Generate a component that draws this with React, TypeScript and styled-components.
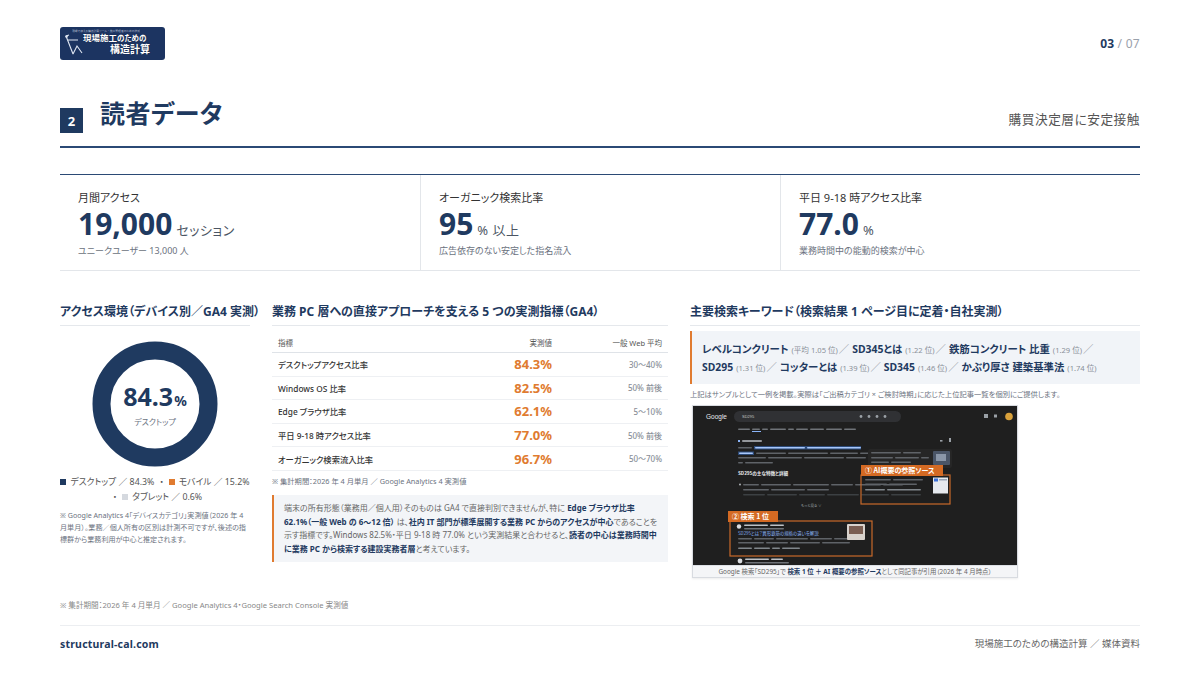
import * as React from 'react';
import styled, { createGlobalStyle } from 'styled-components';

const NAVY = '#1f3a60';
const ORANGE = '#e07b30';
const GRAY = '#6b7280';

const GlobalStyle = createGlobalStyle`
  * { box-sizing: border-box; margin: 0; padding: 0; }
  body {
    margin: 0;
    background: #fff;
    color: #333;
    font-family: "Noto Sans", "Noto Sans CJK JP", sans-serif;
    font-feature-settings: "palt";
  }
`;

const stats = [
  { label: '月間アクセス', value: '19,000', unit: 'セッション', sub: 'ユニークユーザー 13,000 人' },
  { label: 'オーガニック検索比率', value: '95', unit: '% 以上', sub: '広告依存のない安定した指名流入' },
  { label: '平日 9-18 時アクセス比率', value: '77.0', unit: '%', sub: '業務時間中の能動的検索が中心' },
];

const rows = [
  { name: 'デスクトップアクセス比率', value: '84.3%', avg: '30〜40%' },
  { name: 'Windows OS 比率', value: '82.5%', avg: '50% 前後' },
  { name: 'Edge ブラウザ比率', value: '62.1%', avg: '5〜10%' },
  { name: '平日 9-18 時アクセス比率', value: '77.0%', avg: '50% 前後' },
  { name: 'オーガニック検索流入比率', value: '96.7%', avg: '50〜70%' },
];

const keywords = [
  { word: 'レベルコンクリート', rank: '平均 1.05 位' },
  { word: 'SD345とは', rank: '1.22 位' },
  { word: '鉄筋コンクリート 比重', rank: '1.29 位' },
  { word: 'SD295', rank: '1.31 位' },
  { word: 'コッターとは', rank: '1.39 位' },
  { word: 'SD345', rank: '1.46 位' },
  { word: 'かぶり厚さ 建築基準法', rank: '1.74 位' },
];

const Page = styled.div`
  width: 1200px;
  height: 675px;
  padding: 27px 60px 0;
  display: flex;
  flex-direction: column;
  overflow: hidden;
`;

const TopBar = styled.header`
  display: flex;
  justify-content: space-between;
  align-items: center;
  height: 33px;
`;

const Logo = styled.div`
  width: 105px;
  height: 33px;
  background: #1c3461;
  border-radius: 3px;
  display: flex;
  align-items: flex-start;
  padding: 2px 0 0 4px;
  overflow: hidden;
`;

const LogoMark = styled.svg`
  width: 19px;
  height: 22px;
  flex: none;
  margin-top: 5px;
`;

const LogoText = styled.div`
  display: flex;
  flex-direction: column;
  color: #fff;
  font-family: "Noto Sans CJK JP", sans-serif;
  font-weight: 700;
`;

const LogoTiny = styled.span`
  width: 68px;
  margin-left: -11px;
  font-size: 2.8px;
  line-height: 4px;
  font-weight: 400;
  color: #aab4c8;
  white-space: nowrap;
  overflow: hidden;
`;

const LogoLine = styled.span<{ $indent?: number; $size: number }>`
  font-size: ${p => p.$size}px;
  line-height: ${p => p.$size + 1}px;
  margin-left: ${p => p.$indent || 0}px;
  white-space: nowrap;
  text-shadow: 0 0 1px #0b1a36;
  small { font-size: 7.5px; }
`;

const PageNo = styled.div`
  font-size: 12px;
  color: #9aa1ab;
  letter-spacing: 0.3px;
  b { color: ${NAVY}; font-weight: 700; margin-right: 3px; }
`;

const SectionHead = styled.div`
  margin-top: 38px;
  padding-bottom: 13px;
  border-bottom: 2px solid #2b4a75;
  display: flex;
  align-items: flex-start;
`;

const Badge = styled.div`
  width: 23px;
  height: 25px;
  margin-top: 10px;
  background: ${NAVY};
  color: #fff;
  font-size: 13px;
  font-weight: 700;
  display: flex;
  align-items: center;
  justify-content: center;
`;

const Title = styled.h1`
  margin-left: 17px;
  font-size: 25px;
  line-height: 30px;
  font-weight: 700;
  color: ${NAVY};
  letter-spacing: 0.5px;
`;

const Lead = styled.div`
  margin-left: auto;
  margin-top: 11px;
  font-size: 12.7px;
  color: #555;
  letter-spacing: 0.5px;
`;

const StatGrid = styled.section`
  margin-top: 26px;
  border-top: 1.5px solid #2b4a75;
  border-bottom: 1px solid #e3e6ea;
  display: grid;
  grid-template-columns: repeat(3, 1fr);
`;

const StatCell = styled.div`
  padding: 15px 18px 12px;
  & + & { border-left: 1px solid #e3e6ea; }
`;

const StatLabel = styled.div`
  font-size: 11px;
  line-height: 16px;
  color: #333;
`;

const StatValue = styled.div`
  display: flex;
  align-items: baseline;
  gap: 4px;
  height: 36px;
  color: ${NAVY};
  strong {
    font-family: "Noto Sans", sans-serif;
    font-size: 30px;
    line-height: 36px;
    font-weight: 700;
  }
  span { font-size: 13px; color: #4b5563; letter-spacing: 0.5px; }
`;

const StatSub = styled.div`
  margin-top: 2px;
  font-size: 9px;
  line-height: 14px;
  color: ${GRAY};
`;

const Columns = styled.div`
  margin-top: 32px;
  display: grid;
  grid-template-columns: 190px 396px 450px;
  column-gap: 22px;
  align-items: start;
`;

const Col = styled.div`
  display: flex;
  flex-direction: column;
`;

const ColTitle = styled.h2`
  font-size: 12px;
  line-height: 18px;
  font-weight: 700;
  color: ${NAVY};
  padding-bottom: 4px;
  border-bottom: 1px solid #e5e8ec;
  white-space: nowrap;
`;

const DonutWrap = styled.div`
  position: relative;
  width: 130px;
  height: 130px;
  margin: 13px auto 0;
`;

const DonutLabel = styled.div`
  position: absolute;
  inset: 0;
  display: flex;
  flex-direction: column;
  align-items: center;
  justify-content: center;
  color: ${NAVY};
  strong {
    font-family: "Noto Sans", sans-serif;
    font-size: 25px;
    line-height: 28px;
    font-weight: 700;
  }
  strong small { font-size: 14px; margin-left: 1px; }
  span { font-size: 8px; color: ${GRAY}; margin-top: 1px; }
`;

const Legend = styled.div`
  margin-top: 6px;
  font-size: 8.8px;
  line-height: 15px;
  color: #555;
  text-align: center;
`;

const Swatch = styled.i<{ $color: string }>`
  display: inline-block;
  width: 6px;
  height: 6px;
  background: ${p => p.$color};
  margin-right: 4px;
  vertical-align: 0;
`;

const Dot = styled.span`
  margin: 0 5px;
`;

const SmallNote = styled.p<{ $top?: number; $size?: number }>`
  margin-top: ${p => p.$top ?? 4}px;
  font-size: ${p => p.$size ?? 7.3}px;
  line-height: 12px;
  color: ${GRAY};
`;

const Table = styled.div`
  margin-top: 7px;
  display: flex;
  flex-direction: column;
`;

const TRow = styled.div<{ $head?: boolean }>`
  display: grid;
  grid-template-columns: 1fr 100px 110px;
  align-items: center;
  height: ${p => (p.$head ? 20 : 23.6)}px;
  padding: 0 6px;
  border-bottom: 1px solid ${p => (p.$head ? '#dfe3e8' : '#eef0f3')};
  font-size: ${p => (p.$head ? 7.5 : 8.3)}px;
  color: ${p => (p.$head ? '#555' : '#333')};
  font-weight: ${p => (p.$head ? 400 : 500)};
`;

const TCell = styled.div<{ $align?: 'right' }>`
  text-align: ${p => p.$align || 'left'};
`;

const Rate = styled(TCell)`
  font-family: "Noto Sans", sans-serif;
  font-size: 13px;
  font-weight: 700;
  color: ${ORANGE};
`;

const Avg = styled(TCell)`
  font-size: 8px;
  color: #8a9099;
`;

const Callout = styled.div`
  margin-top: 8px;
  background: #f3f5f8;
  border-left: 2.5px solid ${ORANGE};
  padding: 6px 10px 6px 10px;
  font-size: 8px;
  line-height: 13.7px;
  color: #666;
  b { color: ${NAVY}; font-weight: 700; }
`;

const NoBreak = styled.b`
  white-space: nowrap;
`;

const KeywordBox = styled.div`
  margin-top: 5px;
  background: #f1f4f8;
  border-left: 2.5px solid ${ORANGE};
  padding: 10px 7px 7px 10px;
  font-size: 10.4px;
  line-height: 17px;
  color: ${NAVY};
`;

const Word = styled.b`
  font-weight: 700;
`;

const Rank = styled.span`
  font-size: 7.6px;
  color: #8a9099;
  margin: 0 1px 0 3px;
`;

const Slash = styled.span`
  color: #8a9099;
  margin-right: 3px;
`;

const Shot = styled.figure`
  margin: 5px 0 0 2px;
  width: 326px;
  border: 1px solid #d8dbe0;
  box-shadow: 0 1px 2px rgba(0, 0, 0, 0.08);
  display: flex;
  flex-direction: column;
  svg { display: block; }
`;

const ShotCaption = styled.figcaption`
  height: 12px;
  background: #f4f5f7;
  border-top: 1px solid #dde0e5;
  font-size: 6.4px;
  line-height: 11px;
  color: #666;
  text-align: center;
  b { color: ${NAVY}; }
`;

const PageNote = styled.p`
  margin-top: 21px;
  font-size: 7.6px;
  line-height: 12px;
  color: #888;
`;

const Footer = styled.footer`
  margin-top: 14px;
  border-top: 1px solid #eceef1;
  padding-top: 11px;
  display: flex;
  justify-content: space-between;
  align-items: center;
  line-height: 14px;
`;

const Domain = styled.div`
  font-size: 10.5px;
  font-weight: 700;
  color: ${NAVY};
  letter-spacing: 0.2px;
`;

const FooterRight = styled.div`
  font-size: 9.5px;
  color: #666;
`;

const grayLines = (y: number, x: number, widths: number[], color = '#5f6368') => {
  let cx = x;
  return widths.map((w, i) => {
    const r = <rect key={`${y}-${i}`} x={cx} y={y} width={w} height={1.6} rx={0.8} fill={color} />;
    cx += w + 2;
    return r;
  });
};

const SerpShot: React.FC = () => (
  <svg width="324" height="159" viewBox="0 0 324 159">
    <rect width="324" height="159" fill="#1f1f1f" />
    <text x="13" y="12.5" fill="#e8eaed" fontSize="6.5" fontFamily="Liberation Sans, sans-serif">Google</text>
    <rect x="41" y="5" width="167" height="11" rx="5.5" fill="#303134" />
    <text x="49" y="12.2" fill="#c4c7c5" fontSize="4" fontFamily="Liberation Sans, sans-serif">SD295</text>
    {[168, 176, 184, 192].map(cx => <circle key={cx} cx={cx} cy={10.5} r={1.4} fill="#9aa0a6" />)}
    <rect x="291" y="8" width="4" height="4" fill="#9aa0a6" />
    <rect x="301" y="8.5" width="3" height="3" fill="#9aa0a6" />
    <circle cx="316" cy="10.5" r="3.8" fill="#d9a13b" />
    {grayLines(22.5, 45, [12, 8, 6, 16, 6, 12, 14, 16, 12], '#6f7378')}
    <rect x="59" y="25" width="9" height="1" fill="#8ab4f8" />
    <rect x="45" y="34" width="2" height="2" fill="#8ab4f8" />
    {grayLines(34.2, 49, [20], '#bdc1c6')}
    <rect x="247" y="34" width="2.5" height="1.6" fill="#9aa0a6" />
    {grayLines(41, 45, [14])}
    <rect x="61" y="40" width="107" height="3.5" fill="#2c4a78" />
    {grayLines(41, 62, [50, 54], '#a8c7fa')}
    <rect x="45" y="45.5" width="16" height="3.5" fill="#2c4a78" />
    {grayLines(46.5, 46, [14], '#a8c7fa')}
    {grayLines(46.5, 63, [30, 40, 28, 10])}
    {grayLines(51, 45, [28, 34, 40, 20, 6])}
    {grayLines(56, 45, [5, 28])}
    <text x="45" y="68.5" fill="#e8eaed" fontSize="4.6" fontWeight="700" fontFamily="Noto Sans CJK JP, sans-serif">SD295の主な特徴と詳細</text>
    <circle cx="47" cy="78.5" r="0.9" fill="#bdc1c6" />
    {grayLines(78, 50, [16, 30, 36, 22, 26, 20])}
    {grayLines(83, 50, [26, 34, 22])}
    {grayLines(88, 50, [22, 30, 26, 32, 28, 30], '#3c4043')}
    <text x="108" y="101" fill="#9aa0a6" fontSize="3.6" fontFamily="Noto Sans CJK JP, sans-serif">もっと見る ∨</text>

    <rect x="175" y="43" width="84" height="19" rx="2" fill="#262626" />
    {grayLines(46, 178, [30, 18])}
    {grayLines(51, 178, [22, 24, 8])}
    {grayLines(55.5, 178, [18, 20])}
    <rect x="240" y="45" width="17" height="14" rx="1" fill="#4a5567" />
    <rect x="243" y="48" width="10" height="7" fill="#8a96a8" />
    <rect x="256" y="32" width="2" height="4" fill="#9aa0a6" />

    <rect x="168" y="69" width="89" height="29" fill="none" stroke="#c8692a" strokeWidth="1.2" />
    {grayLines(73, 172, [26, 30])}
    {grayLines(77.5, 172, [22, 28])}
    {grayLines(83, 172, [20, 34], '#80868b')}
    <rect x="240" y="71.5" width="15" height="16" fill="#e6e9ee" />
    <rect x="241" y="72.5" width="4" height="3" fill="#3b6fd6" />
    <rect x="246" y="73" width="8" height="1.5" fill="#9aa5b6" />
    <rect x="168" y="59" width="82" height="11" fill="#d46a23" />
    <text x="172" y="67.2" fill="#fff" fontSize="7" fontWeight="700" fontFamily="Noto Sans CJK JP, sans-serif">① AI概要の参照ソース</text>

    <rect x="37" y="115" width="142" height="35" fill="none" stroke="#c8692a" strokeWidth="1.2" />
    <circle cx="46" cy="120.5" r="2.2" fill="#dadce0" />
    {grayLines(118.5, 51, [24, 14], '#bdc1c6')}
    {grayLines(122, 51, [40], '#6f7378')}
    <text x="45" y="128.5" fill="#8ab4f8" fontSize="4.4" fontFamily="Noto Sans CJK JP, sans-serif">SD295とは？異形鉄筋の規格の違いを解説</text>
    {grayLines(132, 45, [14, 20, 32, 22, 18])}
    {grayLines(136, 45, [26, 22, 30, 28])}
    {grayLines(141.5, 45, [14, 16, 8, 18], '#80868b')}
    <rect x="154" y="118" width="18" height="16" rx="1" fill="#d8d2cc" />
    <rect x="156" y="120" width="14" height="8" fill="#7a5e52" />
    <rect x="35" y="105" width="50" height="11" fill="#d46a23" />
    <text x="39" y="113.2" fill="#fff" fontSize="7" fontWeight="700" fontFamily="Noto Sans CJK JP, sans-serif">② 検索 1 位</text>

    <circle cx="47" cy="155" r="2.4" fill="#dadce0" />
    {grayLines(152.5, 52, [24, 12], '#bdc1c6')}
    {grayLines(156, 52, [44], '#6f7378')}
  </svg>
);

const DonutChart: React.FC = () => (
  <DonutWrap>
    <svg width="130" height="130" viewBox="0 0 130 130">
      <circle cx="65" cy="65" r="53.5" fill="none" stroke={NAVY} strokeWidth="18" />
    </svg>
    <DonutLabel>
      <strong>84.3<small>%</small></strong>
      <span>デスクトップ</span>
    </DonutLabel>
  </DonutWrap>
);

const App: React.FC = () => (
  <>
    <GlobalStyle />
    <Page>
      <TopBar>
        <Logo>
          <LogoMark viewBox="0 0 19 22">
            <path d="M2 2 L9 20 M2 2 L5 1 M9 20 L13 12 L18 19 M4 6 L14 6" stroke="#dfe6f2" strokeWidth="1.1" fill="none" />
            <circle cx="2.5" cy="2.5" r="1.3" fill="#dfe6f2" />
          </LogoMark>
          <LogoText>
            <LogoTiny>現場で使える構造計算ツール ・ 施工管理者のための技術情報</LogoTiny>
            <LogoLine $size={8.5}>現場施工<small>のための</small></LogoLine>
            <LogoLine $size={10} $indent={27}>構造計算</LogoLine>
          </LogoText>
        </Logo>
        <PageNo><b>03</b>/ 07</PageNo>
      </TopBar>

      <SectionHead>
        <Badge>2</Badge>
        <Title>読者データ</Title>
        <Lead>購買決定層に安定接触</Lead>
      </SectionHead>

      <StatGrid>
        {stats.map(s => (
          <StatCell key={s.label}>
            <StatLabel>{s.label}</StatLabel>
            <StatValue>
              <strong>{s.value}</strong>
              <span>{s.unit}</span>
            </StatValue>
            <StatSub>{s.sub}</StatSub>
          </StatCell>
        ))}
      </StatGrid>

      <Columns>
        <Col>
          <ColTitle>アクセス環境（デバイス別／GA4 実測）</ColTitle>
          <DonutChart />
          <Legend>
            <Swatch $color={NAVY} />デスクトップ ／ 84.3%<Dot>・</Dot>
            <Swatch $color={ORANGE} />モバイル ／ 15.2%
            <br />
            <Dot>・</Dot><Swatch $color="#d5d9df" />タブレット ／ 0.6%
          </Legend>
          <SmallNote $top={4} $size={7.1}>
            ※ Google Analytics 4「デバイスカテゴリ」実測値（2026 年 4 月単月）。業務／個人所有の区別は計測不可ですが、後述の指標群から業務利用が中心と推定されます。
          </SmallNote>
        </Col>

        <Col>
          <ColTitle>業務 PC 層への直接アプローチを支える 5 つの実測指標（GA4）</ColTitle>
          <Table>
            <TRow $head>
              <TCell>指標</TCell>
              <TCell $align="right">実測値</TCell>
              <TCell $align="right">一般 Web 平均</TCell>
            </TRow>
            {rows.map(r => (
              <TRow key={r.name}>
                <TCell>{r.name}</TCell>
                <Rate $align="right">{r.value}</Rate>
                <Avg $align="right">{r.avg}</Avg>
              </TRow>
            ))}
          </Table>
          <SmallNote $top={4}>※ 集計期間：2026 年 4 月単月 ／ Google Analytics 4 実測値</SmallNote>
          <Callout>
            端末の所有形態（業務用／個人用）そのものは GA4 で直接判別できませんが、特に <b>Edge ブラウザ比率</b> <NoBreak>62.1%（一般 Web の 6〜12 倍）</NoBreak> は、<b>社内 IT 部門が標準展開する業務 PC からのアクセスが中心</b>であることを示す指標です。Windows 82.5%・平日 9-18 時 77.0% という実測結果と合わせると、<b>読者の中心は業務時間</b><b>中に業務 PC から検索する建設実務者層</b>と考えています。
          </Callout>
        </Col>

        <Col>
          <ColTitle>主要検索キーワード（検索結果 1 ページ目に定着・自社実測）</ColTitle>
          <KeywordBox>
            {keywords.map((k, i) => (
              <React.Fragment key={k.word}>
                <Word>{k.word}</Word>
                <Rank>({k.rank})</Rank>
                {i < keywords.length - 1 && <Slash>／</Slash>}
              </React.Fragment>
            ))}
          </KeywordBox>
          <SmallNote $top={4}>
            上記はサンプルとして一例を掲載。実際は「ご出稿カテゴリ × ご検討時期」に応じた上位記事一覧を個別にご提供します。
          </SmallNote>
          <Shot>
            <SerpShot />
            <ShotCaption>
              Google 検索「SD295」で <b>検索 1 位 ＋ AI 概要の参照ソース</b>として同記事が引用（2026 年 4 月時点）
            </ShotCaption>
          </Shot>
        </Col>
      </Columns>

      <PageNote>※ 集計期間：2026 年 4 月単月 ／ Google Analytics 4・Google Search Console 実測値</PageNote>

      <Footer>
        <Domain>structural-cal.com</Domain>
        <FooterRight>現場施工のための構造計算 ／ 媒体資料</FooterRight>
      </Footer>
    </Page>
  </>
);

export default App;
